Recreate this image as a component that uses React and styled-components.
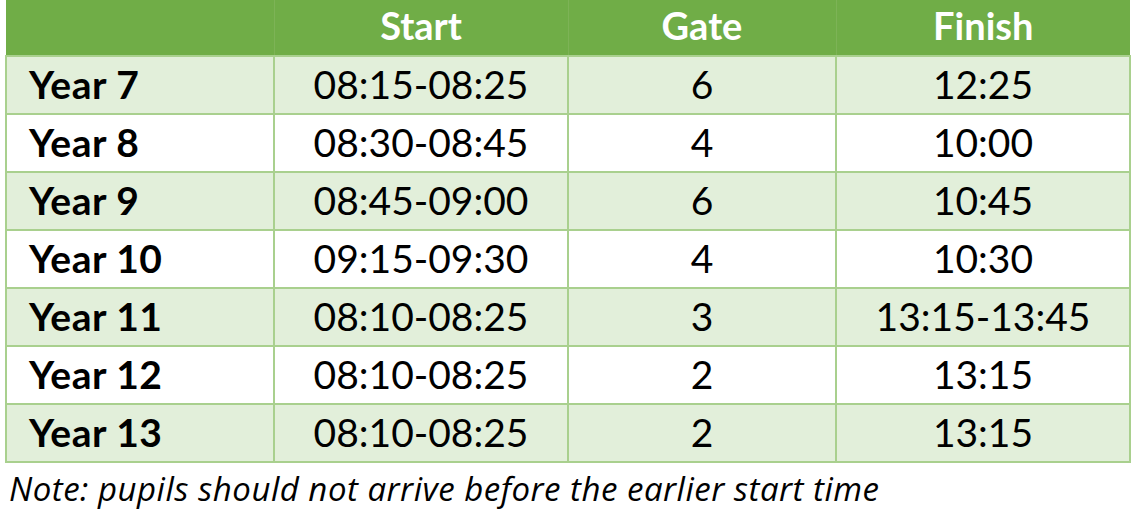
import React from 'react';
import styled, { createGlobalStyle } from 'styled-components';

const GlobalStyle = createGlobalStyle`
  body {
    margin: 0;
    background: #ffffff;
    font-family: Lato, "Liberation Sans", sans-serif;
  }
`;

const rows = [
  { year: 'Year 7', start: '08:15-08:25', gate: '6', finish: '12:25' },
  { year: 'Year 8', start: '08:30-08:45', gate: '4', finish: '10:00' },
  { year: 'Year 9', start: '08:45-09:00', gate: '6', finish: '10:45' },
  { year: 'Year 10', start: '09:15-09:30', gate: '4', finish: '10:30' },
  { year: 'Year 11', start: '08:10-08:25', gate: '3', finish: '13:15-13:45' },
  { year: 'Year 12', start: '08:10-08:25', gate: '2', finish: '13:15' },
  { year: 'Year 13', start: '08:10-08:25', gate: '2', finish: '13:15' },
];

const Wrapper = styled.div`
  padding-left: 5px;
`;

const Table = styled.table`
  border-collapse: collapse;
  width: 1124px;
  table-layout: fixed;
`;

const HeadCell = styled.th`
  background: #70ad47;
  color: #ffffff;
  font-weight: 700;
  font-size: 38px;
  height: 49px;
  padding: 0 0 6px;
  text-align: center;
  border-bottom: 2px solid #a9d08e;
  border-left: 1px solid #7db356;
  &:first-child {
    border-left: none;
  }
`;

const Row = styled.tr`
  background: ${p => (p.$shaded ? '#e2efda' : '#ffffff')};
`;

const Cell = styled.td`
  border: 2px solid #a9d08e;
  height: 54px;
  padding: 0 0 2px;
  font-size: 39px;
  color: #000000;
  text-align: ${p => (p.$label ? 'left' : 'center')};
  font-weight: ${p => (p.$label ? 700 : 400)};
  padding-left: ${p => (p.$label ? '22px' : '0')};
  letter-spacing: ${p => (p.$label ? '0.5px' : '0')};
`;

const Note = styled.p`
  margin: 3px 0 0 4px;
  font-family: "Open Sans", Lato, sans-serif;
  font-style: italic;
  font-size: 33px;
  letter-spacing: 0.5px;
  color: #000000;
`;

const App = () => {
  return (
    <Wrapper>
      <GlobalStyle />
      <Table>
        <colgroup>
          <col style={{ width: 268 }} />
          <col style={{ width: 294 }} />
          <col style={{ width: 268 }} />
          <col style={{ width: 294 }} />
        </colgroup>
        <thead>
          <tr>
            <HeadCell></HeadCell>
            <HeadCell>Start</HeadCell>
            <HeadCell>Gate</HeadCell>
            <HeadCell>Finish</HeadCell>
          </tr>
        </thead>
        <tbody>
          {rows.map((r, i) => (
            <Row key={r.year} $shaded={i % 2 === 0}>
              <Cell $label>{r.year}</Cell>
              <Cell>{r.start}</Cell>
              <Cell>{r.gate}</Cell>
              <Cell>{r.finish}</Cell>
            </Row>
          ))}
        </tbody>
      </Table>
      <Note>Note: pupils should not arrive before the earlier start time</Note>
    </Wrapper>
  );
};

export default App;
